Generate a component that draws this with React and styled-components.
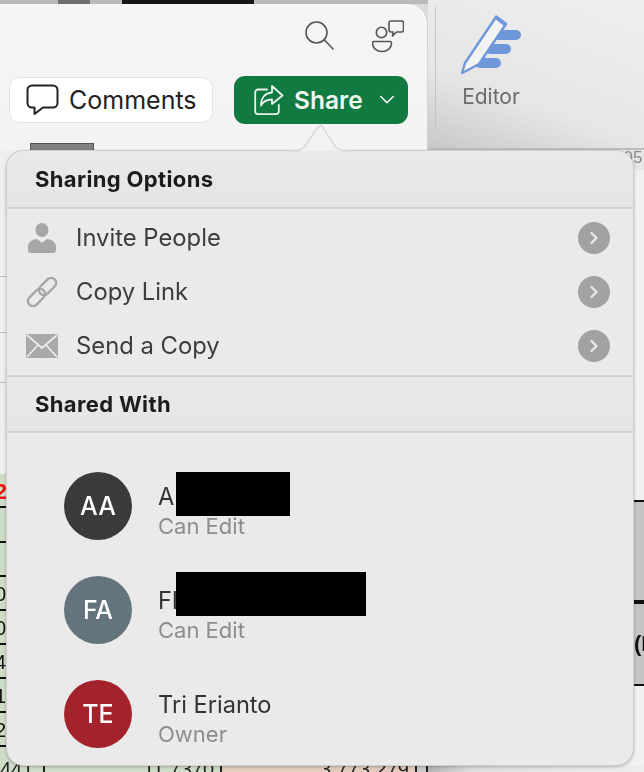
import styled, { createGlobalStyle } from 'styled-components'

const GlobalStyle = createGlobalStyle`
    html, body {
        margin: 0;
        padding: 0;
        background: #f0f0f0;
    }
    * {
        box-sizing: border-box;
    }
`

const leftRows = [
    { h: 127, bg: '#efefef', line: '#bdbdbd', thin: true },
    { h: 56, bg: '#efefef', line: '#bdbdbd', thin: true },
    { h: 50, bg: '#efefef', line: '#bdbdbd', thin: true },
    { h: 91, bg: '#efefef', line: 'transparent', thin: true },
    { h: 34, bg: '#cfdcc8', line: '#111', label: '2', red: true },
    { h: 35, bg: '#cfdcc8', line: '#111' },
    { h: 34, bg: '#cfdcc8', line: '#111' },
    { h: 34, bg: '#cfdcc8', line: '#111', label: '0' },
    { h: 34, bg: '#cfdcc8', line: '#111', label: '0' },
    { h: 34, bg: '#cfdcc8', line: '#111', label: '4' },
    { h: 34, bg: '#cfdcc8', line: '#111', label: '1' },
    { h: 34, bg: '#cfdcc8', line: '#111', label: '2' },
]

const people = [
    { initials: 'AA', color: '#3a3a3a', name: 'A', role: 'Can Edit', redact: 114, top: -11 },
    { initials: 'FA', color: '#64747c', name: 'Fl', role: 'Can Edit', redact: 190, top: -15 },
    { initials: 'TE', color: '#a3222b', name: 'Tri Erianto', role: 'Owner' },
]

const SearchIcon = () => (
    <svg width="30" height="30" viewBox="0 0 30 30" fill="none" stroke="#555" strokeWidth="1.6" strokeLinecap="round">
        <circle cx="11.5" cy="12.5" r="10.5" />
        <path d="M19.5 20l8.500 9" />
    </svg>
)

const CollabIcon = () => (
    <svg width="32" height="33" viewBox="0 0 32 33" fill="none" stroke="#555" strokeWidth="1.6" strokeLinejoin="round">
        <circle cx="9.500" cy="12.500" r="5.200" />
        <path d="M2 21.500h16c1 0 1.500.8 1.500 1.800 0 4.500-4 8.200-9.500 8.200S.5 27.800.5 23.300c0-1 .5-1.800 1.500-1.800z" />
        <path d="M19 1h10.500c1 0 2 .8 2 2v7c0 1-1 2-2 2h-5l-4 4 .5-4H19c-1 0-2-1-2-2V3c0-1.200 1-2 2-2z" />
    </svg>
)

const BubbleIcon = () => (
    <svg width="33" height="32" viewBox="0 0 33 32" fill="none" stroke="#222" strokeWidth="2" strokeLinejoin="round">
        <path d="M6 1.500h21c2.500 0 4.500 2 4.500 4.500v13c0 2.500-2 4.500-4.500 4.500H17L8.500 30v-6.500H6c-2.500 0-4.500-2-4.500-4.500V6c0-2.500 2-4.500 4.500-4.500z" />
    </svg>
)

const ShareIcon = () => (
    <svg width="30" height="32" viewBox="0 0 30 32" fill="none" stroke="#e8f3ec" strokeWidth="1.800" strokeLinejoin="round" strokeLinecap="round">
        <path d="M13 5.500H4c-1.600 0-2.800 1.200-2.800 2.800v19c0 1.600 1.200 2.800 2.800 2.800h18c1.600 0 2.800-1.200 2.800-2.800V21" />
        <path d="M18 2l10.500 9.500L18 20v-4.500c-5 0-8.500 1.500-11 6 0-7.500 4-12.500 11-13z" />
    </svg>
)

const Chevron = ({ color = '#fff', size = 16 }) => (
    <svg width={size} height={size * 0.6} viewBox="0 0 16 10" fill="none" stroke={color} strokeWidth="1.600" strokeLinecap="round" strokeLinejoin="round">
        <path d="M1.500 1.500L8 8l6.500-6.500" />
    </svg>
)

const EditorIcon = () => (
    <svg width="64" height="62" viewBox="0 0 64 62" fill="none">
        <rect x="34" y="16" width="28" height="10" rx="5" fill="#6f98da" />
        <rect x="26" y="30" width="26" height="10" rx="5" fill="#6f98da" />
        <rect x="16" y="44" width="26" height="10" rx="5" fill="#6f98da" />
        <path d="M37 3l10 7-27 40-11 6-6 3 3-10z" fill="#f3f3f3" stroke="#6f98da" strokeWidth="2.400" strokeLinejoin="round" />
        <path d="M37 1l11 8-3 3-10-8z" fill="#6f98da" />
    </svg>
)

const PersonIcon = () => (
    <svg width="28" height="30" viewBox="0 0 28 30" fill="#a6a6a6">
        <ellipse cx="14" cy="7" rx="6.500" ry="7" />
        <path d="M9 16l5 4 5-4c5 .5 9 3 9 8v3c0 2-1 3-3 3H3c-2 0-3-1-3-3v-3c0-5 4-7.500 9-8z" />
    </svg>
)

const LinkIcon = () => (
    <svg width="32" height="30" viewBox="0 0 32 30" fill="none" stroke="#a6a6a6" strokeWidth="2.400">
        <rect x="16.500" y="-0.500" width="10" height="20" rx="5" transform="rotate(45 21.500 9.500)" />
        <rect x="5.500" y="10.500" width="10" height="20" rx="5" transform="rotate(45 10.500 20.500)" />
    </svg>
)

const MailIcon = () => (
    <svg width="32" height="24" viewBox="0 0 32 24">
        <rect width="32" height="24" rx="1" fill="#a9a9a9" />
        <path d="M1 1l15 13L31 1M1 23l11-12M31 23L20 11" fill="none" stroke="#ececec" strokeWidth="1.800" />
    </svg>
)

const ArrowCircle = () => (
    <CircleButton>
        <svg width="12" height="16" viewBox="0 0 12 16" fill="none" stroke="#e8e8e8" strokeWidth="2.400" strokeLinecap="round" strokeLinejoin="round">
            <path d="M3.500 3l5 5-5 5" />
        </svg>
    </CircleButton>
)

const options = [
    { label: 'Invite People', icon: <PersonIcon /> },
    { label: 'Copy Link', icon: <LinkIcon /> },
    { label: 'Send a Copy', icon: <MailIcon /> },
]

const App = () => {
    return (
        <Stage>
            <GlobalStyle />
            <TopRow>
                <PaneWrap>
                    <TopStrip>
                        <StripIcon />
                        <StripBlack />
                    </TopStrip>
                    <Pane>
                        <PaneIcons>
                            <SearchIcon />
                            <CollabIcon />
                        </PaneIcons>
                        <PaneButtons>
                            <CommentsButton>
                                <BubbleIcon />
                                Comments
                            </CommentsButton>
                            <ShareButton>
                                <ShareIcon />
                                Share
                                <ChevronSlot>
                                    <Chevron />
                                </ChevronSlot>
                            </ShareButton>
                        </PaneButtons>
                        <Thumb />
                    </Pane>
                </PaneWrap>
                <Ribbon>
                    <RibbonDivider />
                    <RibbonItem>
                        <EditorIcon />
                        <RibbonLabel>Editor</RibbonLabel>
                    </RibbonItem>
                </Ribbon>
            </TopRow>

            <Sheet>
                <SheetLeft>
                    {leftRows.map((row, i) => (
                        <SheetRow key={i} $h={row.h} $bg={row.bg} $line={row.line} $thin={row.thin}>
                            {row.label && <RowLabel $red={row.red}>{row.label}</RowLabel>}
                        </SheetRow>
                    ))}
                    <LastRow>
                        <LastCell $w={45} $bg="#cfdcc8">
                            441
                        </LastCell>
                        <LastCell $w={177} $bg="#cfdcc8" $end>
                            11,7370
                        </LastCell>
                        <LastCell $w={195} $bg="#e3cbbd" $end>
                            3,773,279
                        </LastCell>
                        <LastCell $w={11} $bg="#c9c9c9" />
                    </LastRow>
                </SheetLeft>
                <SheetRight>
                    <RightBand>05</RightBand>
                    <RightBlank $h={330} />
                    <RightCell $h={102} />
                    <RightCell $h={84}>(I</RightCell>
                    <RightBlank $h={80} />
                    <RightFoot />
                </SheetRight>
            </Sheet>

            <Popover>
                <Notch width="56" height="28" viewBox="0 0 56 28">
                    <path d="M0 27c6 0 9-1 12-5L25 3c1.500-2 3-2 4.500 0L42 22c3 4 6 5 14 5" fill="#f2f2f2" stroke="#d4d4d4" strokeWidth="1.300" />
                </Notch>
                <SectionHead>Sharing Options</SectionHead>
                <OptionList>
                    {options.map((option) => (
                        <OptionRow key={option.label}>
                            <OptionIcon>{option.icon}</OptionIcon>
                            <OptionLabel>{option.label}</OptionLabel>
                            <ArrowCircle />
                        </OptionRow>
                    ))}
                </OptionList>
                <SectionHead $top>Shared With</SectionHead>
                <PeopleList>
                    {people.map((person) => (
                        <PersonRow key={person.initials}>
                            <Avatar $color={person.color}>{person.initials}</Avatar>
                            <PersonText>
                                <PersonName>{person.name}</PersonName>
                                <PersonRole>{person.role}</PersonRole>
                                {person.redact && <Redaction $w={person.redact} $top={person.top} />}
                            </PersonText>
                        </PersonRow>
                    ))}
                </PeopleList>
            </Popover>
        </Stage>
    )
}

export default App

const Stage = styled.div`
    position: relative;
    width: 644px;
    height: 772px;
    overflow: hidden;
    font-family: Inter, 'Liberation Sans', sans-serif;
    filter: blur(0.6px);
`
const TopRow = styled.div`
    display: flex;
    height: 150px;
`
const PaneWrap = styled.div`
    width: 428px;
    flex: none;
    display: flex;
    flex-direction: column;
    background: #dcdcdc;
`
const TopStrip = styled.div`
    height: 4px;
    flex: none;
    display: flex;
    padding-left: 58px;
    gap: 32px;
    background: #b9b9b9;
`
const StripIcon = styled.div`
    width: 32px;
    background: #6e6e6e;
`
const StripBlack = styled.div`
    width: 132px;
    background: #161616;
`
const Pane = styled.div`
    flex: 1;
    overflow: hidden;
    background: linear-gradient(#f5f5f5, #f3f3f3);
    border-top-right-radius: 20px;
    border-right: 1px solid #d4d4d4;
`
const PaneIcons = styled.div`
    display: flex;
    justify-content: flex-end;
    align-items: flex-start;
    gap: 37px;
    height: 72px;
    padding: 16px 23px 0 0;
`
const PaneButtons = styled.div`
    display: flex;
    align-items: center;
    gap: 21px;
    padding-left: 9px;
`
const CommentsButton = styled.div`
    width: 204px;
    height: 46px;
    display: flex;
    align-items: center;
    gap: 10px;
    padding-left: 16px;
    background: #fff;
    border: 1px solid #e4e4e4;
    border-radius: 11px;
    font-size: 25px;
    color: #222;
`
const ShareButton = styled.div`
    width: 174px;
    height: 48px;
    display: flex;
    align-items: center;
    gap: 10px;
    padding-left: 20px;
    background: #117a41;
    border-radius: 11px;
    font-size: 24.500px;
    font-weight: 600;
    color: #eef6f0;
`
const ChevronSlot = styled.span`
    display: flex;
    margin-left: 6px;
`
const Thumb = styled.div`
    width: 64px;
    height: 30px;
    margin: 19px 0 0 30px;
    background: #808080;
    border: 1px solid #555;
`
const Ribbon = styled.div`
    flex: 1;
    display: flex;
    align-items: flex-start;
    padding: 7px 0 0 7px;
    background: linear-gradient(20deg, #c8c8c8, #e6e6e6 35%, #efefef);
    border-bottom: 2px solid #bdbdbd;
`
const RibbonDivider = styled.div`
    width: 1px;
    height: 123px;
    flex: none;
    background: #c4c4c4;
`
const RibbonItem = styled.div`
    width: 64px;
    display: flex;
    flex-direction: column;
    align-items: center;
    gap: 8px;
    margin: 7px 0 0 23px;
`
const RibbonLabel = styled.div`
    font-size: 21px;
    color: #6b6b6b;
`
const Sheet = styled.div`
    display: flex;
    height: 622px;
`
const SheetLeft = styled.div`
    width: 428px;
    flex: none;
    display: flex;
    flex-direction: column;
`
const SheetRow = styled.div`
    height: ${(props) => props.$h}px;
    flex: none;
    display: flex;
    align-items: center;
    width: 100%;
    background: ${(props) => props.$bg};
    border-bottom: ${(props) => (props.$thin ? 1 : 2)}px solid ${(props) => props.$line};
    overflow: hidden;
`
const RowLabel = styled.span`
    width: ${(props) => (props.$red ? 7 : 6)}px;
    margin-top: 3px;
    display: flex;
    justify-content: flex-end;
    font: ${(props) => (props.$red ? 'bold 22px' : 'normal 20px')} 'Liberation Sans', sans-serif;
    color: ${(props) => (props.$red ? '#f01010' : '#111')};
    white-space: nowrap;
`
const LastRow = styled.div`
    flex: 1;
    display: flex;
    overflow: hidden;
`
const LastCell = styled.div`
    width: ${(props) => props.$w}px;
    flex: none;
    display: flex;
    justify-content: ${(props) => (props.$end ? 'flex-end' : 'flex-start')};
    padding: 11px 6px 0 0;
    background: ${(props) => props.$bg};
    border-right: 2px solid #222;
    font: 20px/22px 'Liberation Sans', sans-serif;
    color: #222;
    white-space: nowrap;
`
const SheetRight = styled.div`
    flex: 1;
    display: flex;
    flex-direction: column;
`
const RightBand = styled.div`
    height: 20px;
    flex: none;
    display: flex;
    justify-content: flex-end;
    padding-right: 5px;
    background: #e6e6e6;
    font: 17px/16px 'Liberation Sans', sans-serif;
    color: #888;
`
const RightBlank = styled.div`
    height: ${(props) => props.$h}px;
    flex: none;
    background: #f1f1f1;
`
const RightCell = styled.div`
    height: ${(props) => props.$h}px;
    flex: none;
    display: flex;
    align-items: center;
    padding-left: 206px;
    background: #c4c4c4;
    border-top: 2px solid #111;
    border-bottom: 2px solid #111;
    font: bold 22px 'Liberation Sans', sans-serif;
    color: #111;
    white-space: nowrap;
    overflow: hidden;
`
const RightFoot = styled.div`
    flex: 1;
    background: linear-gradient(90deg, #b5b5b5, #dedede 20%, #eee);
`
const Popover = styled.div`
    position: absolute;
    left: 6px;
    top: 150px;
    width: 628px;
    height: 616px;
    display: flex;
    flex-direction: column;
    background: #eaeaea;
    border: 1px solid #cfcfcf;
    border-radius: 18px;
    box-shadow: 0 1px 3px rgba(0, 0, 0, 0.25);
`
const Notch = styled.svg`
    position: absolute;
    left: 286px;
    top: -27px;
`
const SectionHead = styled.div`
    height: 58px;
    flex: none;
    display: flex;
    align-items: center;
    padding-left: 28px;
    background: linear-gradient(#e9e9e9, #e5e5e5);
    border-bottom: 2px solid #d2d2d2;
    border-top: ${(props) => (props.$top ? '2px solid #d2d2d2' : 'none')};
    border-radius: ${(props) => (props.$top ? '0' : '18px 18px 0 0')};
    font-size: 22px;
    letter-spacing: 0.35px;
    font-weight: 700;
    color: #1c1c1c;
`
const OptionList = styled.div`
    display: flex;
    flex-direction: column;
    padding: 2px 0;
`
const OptionRow = styled.div`
    height: 54px;
    display: flex;
    align-items: center;
    padding: 0 23px 0 19px;
`
const OptionIcon = styled.span`
    width: 32px;
    flex: none;
    display: flex;
    justify-content: center;
`
const OptionLabel = styled.span`
    flex: 1;
    margin-left: 18px;
    padding-bottom: 2px;
    font-size: 23.800px;
    color: #3d3d3d;
`
const CircleButton = styled.span`
    width: 32px;
    height: 32px;
    display: flex;
    align-items: center;
    justify-content: center;
    border-radius: 50%;
    background: #a2a2a2;
`
const PeopleList = styled.div`
    display: flex;
    flex-direction: column;
    gap: 34px;
    padding: 38px 0 0 57px;
`
const PersonRow = styled.div`
    display: flex;
    align-items: center;
    gap: 26px;
`
const Avatar = styled.div`
    width: 68px;
    height: 68px;
    flex: none;
    display: flex;
    align-items: center;
    justify-content: center;
    border-radius: 50%;
    background: ${(props) => props.$color};
    font-size: 25px;
    font-weight: 500;
    color: #fff;
`
const PersonText = styled.div`
    position: relative;
    margin-top: 12px;
`
const PersonName = styled.div`
    height: 28px;
    line-height: 28px;
    font-size: 23.600px;
    color: #333;
`
const PersonRole = styled.div`
    height: 30px;
    line-height: 30px;
    font-size: 22px;
    color: #8d8d8d;
`
const Redaction = styled.div`
    position: absolute;
    left: 18px;
    top: ${(props) => props.$top}px;
    width: ${(props) => props.$w}px;
    height: 44px;
    background: #000;
`
